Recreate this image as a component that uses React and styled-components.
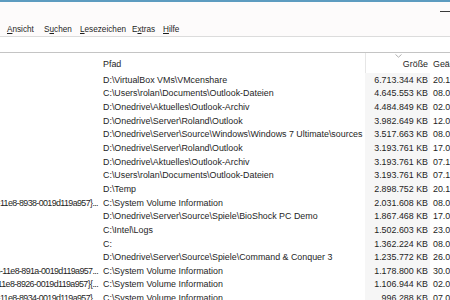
import React from 'react';
import styled, { createGlobalStyle } from 'styled-components';

const Global = createGlobalStyle`
  html, body {
    margin: 0;
    padding: 0;
    background: #ffffff;
    overflow: hidden;
  }
  body {
    font-family: "Liberation Sans", Arial, sans-serif;
    color: #1e1e1e;
  }
`;

const Window = styled.div`
  width: 450px;
  height: 300px;
  overflow: hidden;
  background: #fff;
`;

const TitleBar = styled.div`
  height: 19px;
  border-top: 2px solid #5d9cc0;
  background: #fdfbfb;
  display: flex;
  justify-content: flex-end;
  align-items: flex-start;
`;

const MinimizeGlyph = styled.div`
  width: 10px;
  height: 1px;
  margin-top: 9px;
  background: #3a3a3a;
`;

const MenuBar = styled.div`
  height: 16px;
  background: #fdfbfb;
  display: flex;
  align-items: center;
  padding-left: 7px;
  padding-top: 1px;
  box-sizing: border-box;
  font-size: 8.2px;
  border-bottom: 1px solid #dcdcdc;
`;

const MenuItem = styled.span`
  width: ${(p) => p.$w}px;
  flex-shrink: 0;
  white-space: nowrap;
  u {
    text-decoration: underline;
    text-underline-offset: 1px;
  }
`;

const Toolbar = styled.div`
  height: 16px;
  box-sizing: border-box;
  background: #fff;
  border-bottom: 1px solid #c4c4c4;
`;

const Table = styled.div`
  font-size: 8.9px;
`;

const Cols = '100px 265px 65px 1fr';

const HeaderRow = styled.div`
  height: 20px;
  display: grid;
  grid-template-columns: ${Cols};
`;

const HeaderCell = styled.div`
  position: relative;
  display: flex;
  align-items: center;
  padding: ${(p) => (p.$right ? '1px 2px 0 0' : '1px 0 0 3px')};
  justify-content: ${(p) => (p.$right ? 'flex-end' : 'flex-start')};
  border-left: ${(p) => (p.$divider ? '1px solid #e6e6e6' : 'none')};
  white-space: nowrap;
  overflow: hidden;
`;

const SortArrow = styled.svg`
  position: absolute;
  top: 1px;
  left: 29px;
`;

const Row = styled.div`
  height: 13.65px;
  display: grid;
  grid-template-columns: ${Cols};
`;

const Cell = styled.div`
  display: flex;
  align-items: center;
  white-space: nowrap;
  overflow: hidden;
  justify-content: ${(p) => (p.$right ? 'flex-end' : 'flex-start')};
  padding: ${(p) => (p.$right ? '0 2px 0 0' : '0 0 0 3px')};
  background: ${(p) => (p.$sorted ? '#f6f6f6' : 'transparent')};
`;

const NameCell = styled(Cell)`
  letter-spacing: -0.6px;
`;

const rows = [
  ['', 'D:\\VirtualBox VMs\\VMcenshare', '6.713.344 KB', '20.12.2018 09:14'],
  ['', 'C:\\Users\\rolan\\Documents\\Outlook-Dateien', '4.645.553 KB', '08.02.2019 11:02'],
  ['', 'D:\\Onedrive\\Aktuelles\\Outlook-Archiv', '4.484.849 KB', '02.01.2019 17:40'],
  ['', 'D:\\Onedrive\\Server\\Roland\\Outlook', '3.982.649 KB', '12.08.2018 10:21'],
  ['', 'D:\\Onedrive\\Server\\Source\\Windows\\Windows 7 Ultimate\\sources', '3.517.663 KB', '08.09.2015 07:55'],
  ['', 'D:\\Onedrive\\Server\\Roland\\Outlook', '3.193.761 KB', '17.03.2017 12:12'],
  ['', 'D:\\Onedrive\\Aktuelles\\Outlook-Archiv', '3.193.761 KB', '07.12.2017 08:30'],
  ['', 'C:\\Users\\rolan\\Documents\\Outlook-Dateien', '3.193.761 KB', '07.12.2017 08:30'],
  ['', 'D:\\Temp', '2.898.752 KB', '20.12.2018 09:14'],
  ['{7c1d4e02-0b56-11e8-8938-0019d119a957}...', 'C:\\System Volume Information', '2.031.608 KB', '08.02.2019 11:02'],
  ['', 'D:\\Onedrive\\Server\\Source\\Spiele\\BioShock PC Demo', '1.867.468 KB', '17.08.2007 14:20'],
  ['', 'C:\\Intel\\Logs', '1.502.603 KB', '23.01.2019 06:48'],
  ['', 'C:', '1.362.224 KB', '08.02.2019 11:02'],
  ['', 'D:\\Onedrive\\Server\\Source\\Spiele\\Command & Conquer 3', '1.235.772 KB', '26.02.2007 19:03'],
  ['{3a7e51b0-0b56-11e8-891a-0019d119a957...', 'C:\\System Volume Information', '1.178.800 KB', '30.01.2019 09:44'],
  ['{5b2f18c4-0b56-11e8-8926-0019d119a957}{...', 'C:\\System Volume Information', '1.106.944 KB', '02.02.2019 10:15'],
  ['{6e4d22a1-0b56-11e8-8934-0019d119a957}...', 'C:\\System Volume Information', '996.288 KB', '07.02.2019 13:36'],
];

const menus = [
  { parts: ['', 'A', 'nsicht'], w: 37 },
  { parts: ['S', 'u', 'chen'], w: 36 },
  { parts: ['', 'L', 'esezeichen'], w: 52 },
  { parts: ['E', 'x', 'tras'], w: 31 },
  { parts: ['', 'H', 'ilfe'], w: 30 },
];

const App = () => {
  return (
    <Window>
      <Global />
      <TitleBar>
        <MinimizeGlyph />
      </TitleBar>
      <MenuBar>
        {menus.map(({ parts, w }) => (
          <MenuItem key={parts.join('')} $w={w}>
            {parts[0]}
            <u>{parts[1]}</u>
            {parts[2]}
          </MenuItem>
        ))}
      </MenuBar>
      <Toolbar />
      <Table>
        <HeaderRow>
          <HeaderCell />
          <HeaderCell>Pfad</HeaderCell>
          <HeaderCell $right $divider>
            <SortArrow width="7" height="4" viewBox="0 0 7 4">
              <path d="M0.5 0.5 L3.5 3.2 L6.5 0.5" fill="none" stroke="#a8a8a8" strokeWidth="0.9" />
            </SortArrow>
            Größe
          </HeaderCell>
          <HeaderCell>Geändert</HeaderCell>
        </HeaderRow>
        {rows.map(([name, path, size, date], i) => (
          <Row key={i}>
            <NameCell $right>{name}</NameCell>
            <Cell>{path}</Cell>
            <Cell $right $sorted>{size}</Cell>
            <Cell>{date}</Cell>
          </Row>
        ))}
      </Table>
    </Window>
  );
};

export default App;
